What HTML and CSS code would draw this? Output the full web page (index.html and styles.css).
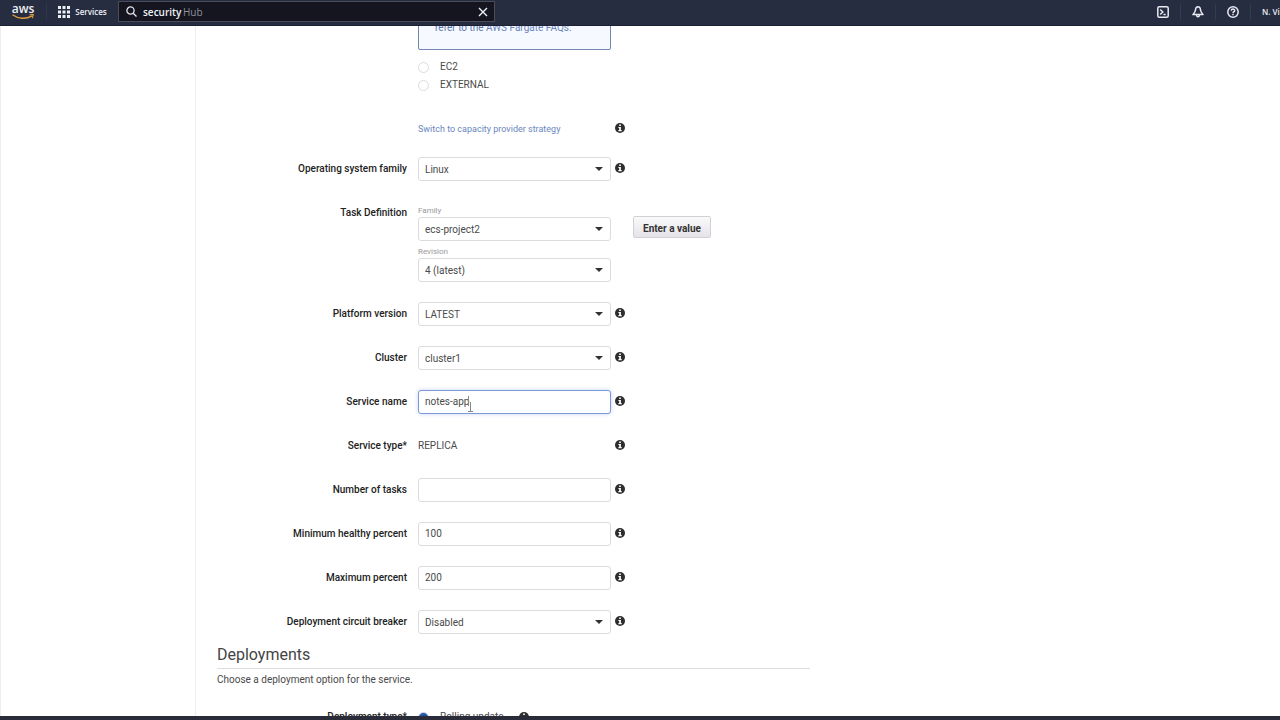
FILE: index.html
```
<!DOCTYPE html>
<html lang="en">
<head>
    <meta charset="UTF-8">
    <meta name="viewport" content="width=device-width, initial-scale=1.0">
    <title>Create Service</title>
    <link rel="stylesheet" href="styles.css">
</head>
<body>
    <svg class="defs" aria-hidden="true">
        <symbol id="info" viewBox="0 0 10 10">
            <circle cx="5" cy="5" r="5" fill="#2e2e2e"/>
            <path d="M4.2 1.5h1.7v1.5H4.2zM3.4 4h2.5v3.1h.8v1.1H3.4V7.1h.8V5h-.8z" fill="#fff"/>
        </symbol>
    </svg>

    <header class="topbar">
        <a class="logo" href="#" aria-label="AWS home">
            <span class="logo-text">aws</span>
            <svg class="logo-smile" viewBox="0 0 22 6">
                <path d="M0.5 0.8C6 5 14 5.4 20 1.8" fill="none" stroke="#e39a3b" stroke-width="1.4"/>
                <path d="M17.5 0.7L21.3 0.5L20.3 4.2" fill="none" stroke="#e39a3b" stroke-width="1.1"/>
            </svg>
        </a>
        <button class="services">
            <svg width="12" height="12" viewBox="0 0 12 12" fill="#eef0f5">
                <path d="M0 0h3v3H0zM4.5 0h3v3h-3zM9 0h3v3H9zM0 4.5h3v3H0zM4.5 4.5h3v3h-3zM9 4.5h3v3H9zM0 9h3v3H0zM4.5 9h3v3h-3zM9 9h3v3H9z"/>
            </svg>
            Services
        </button>
        <div class="search">
            <svg width="11" height="11" viewBox="0 0 11 11" fill="none" stroke="#e3e5ea" stroke-width="1.3">
                <circle cx="4.5" cy="4.5" r="3.6"/>
                <path d="M7.2 7.2L10.5 10.5"/>
            </svg>
            <input class="search-input" type="text" value="security" aria-label="Search">
            <span class="search-hint">Hub</span>
            <button class="search-clear" aria-label="Clear search">
                <svg width="10" height="10" viewBox="0 0 10 10" stroke="#eef0f5" stroke-width="1.4"><path d="M1 1l8 8M9 1L1 9"/></svg>
            </button>
        </div>
        <nav class="tools">
            <button class="tool" aria-label="CloudShell">
                <svg width="12" height="12" viewBox="0 0 12 12" fill="none" stroke="#e6e8f2" stroke-width="1.5">
                    <rect x="0.8" y="0.8" width="10.4" height="10.4" rx="1.5"/>
                    <path d="M3.2 3.5L5.8 6L3.2 8.5M6.5 8.5h2.2"/>
                </svg>
            </button>
            <button class="tool" aria-label="Notifications">
                <svg width="12" height="12" viewBox="0 0 12 12" fill="none" stroke="#e6e8f2" stroke-width="1.5">
                    <path d="M6 0.8C4.2 0.9 3.6 2.3 3.5 3.8C3.4 6 2.4 7 1 8.6H11C9.6 7 8.6 6 8.5 3.8C8.4 2.3 7.8 0.9 6 0.8Z" stroke-linejoin="round"/>
                    <path d="M4.6 8.8C4.6 11.5 7.4 11.5 7.4 8.8"/>
                </svg>
            </button>
            <button class="tool" aria-label="Help">
                <svg width="12" height="12" viewBox="0 0 12 12" fill="none" stroke="#e6e8f2" stroke-width="1.5">
                    <circle cx="6" cy="6" r="5.2"/>
                    <path d="M4.3 4.7C4.3 2.5 7.8 2.6 7.7 4.6C7.6 5.7 6 5.7 6 7.2M6 8v1.3"/>
                </svg>
            </button>
            <button class="account">N. Vi</button>
        </nav>
    </header>

    <div class="page">
        <aside class="sidebar"></aside>
        <main class="content">
            <form class="service-form">
                <div class="row launch-row">
                    <div class="field">
                        <div class="notice">refer to the <a href="#">AWS Fargate FAQs.</a></div>
                        <label class="radio"><input type="radio" name="launch" value="ec2">EC2</label>
                        <label class="radio"><input type="radio" name="launch" value="external">EXTERNAL</label>
                    </div>
                </div>

                <div class="row switch-row">
                    <div class="field"><a href="#">Switch to capacity provider strategy</a></div>
                    <svg class="info"><use href="#info"/></svg>
                </div>

                <div class="row">
                    <label for="os">Operating system family</label>
                    <div class="field select"><select id="os"><option>Linux</option></select></div>
                    <svg class="info"><use href="#info"/></svg>
                </div>

                <div class="row">
                    <span class="row-title">Task Definition</span>
                    <div class="field task">
                        <label class="sub-label" for="family">Family</label>
                        <div class="select"><select id="family"><option>ecs-project2</option></select></div>
                        <label class="sub-label revision" for="revision">Revision</label>
                        <div class="select"><select id="revision"><option>4 (latest)</option></select></div>
                    </div>
                    <button class="btn" type="button">Enter a value</button>
                </div>

                <div class="row">
                    <label for="platform">Platform version</label>
                    <div class="field select"><select id="platform"><option>LATEST</option></select></div>
                    <svg class="info"><use href="#info"/></svg>
                </div>

                <div class="row">
                    <label for="cluster">Cluster</label>
                    <div class="field select"><select id="cluster"><option>cluster1</option></select></div>
                    <svg class="info"><use href="#info"/></svg>
                </div>

                <div class="row">
                    <label for="name">Service name</label>
                    <div class="field name-field">
                        <input class="text active" id="name" type="text" value="notes-app">
                        <svg class="pointer" width="6" height="16" viewBox="0 0 6 16" fill="none">
                            <path d="M1.5 0v10" stroke="#888"/>
                            <path d="M3.5 6v9M1 15.5h5" stroke="#888"/>
                        </svg>
                    </div>
                    <svg class="info"><use href="#info"/></svg>
                </div>

                <div class="row">
                    <span class="row-title">Service type*</span>
                    <div class="field">REPLICA</div>
                    <svg class="info"><use href="#info"/></svg>
                </div>

                <div class="row">
                    <label for="tasks">Number of tasks</label>
                    <div class="field"><input class="text" id="tasks" type="text"></div>
                    <svg class="info"><use href="#info"/></svg>
                </div>

                <div class="row">
                    <label for="min">Minimum healthy percent</label>
                    <div class="field"><input class="text" id="min" type="text" value="100"></div>
                    <svg class="info"><use href="#info"/></svg>
                </div>

                <div class="row">
                    <label for="max">Maximum percent</label>
                    <div class="field"><input class="text" id="max" type="text" value="200"></div>
                    <svg class="info"><use href="#info"/></svg>
                </div>

                <div class="row">
                    <label for="breaker">Deployment circuit breaker</label>
                    <div class="field select"><select id="breaker"><option>Disabled</option></select></div>
                    <svg class="info"><use href="#info"/></svg>
                </div>

                <h2>Deployments</h2>
                <p>Choose a deployment option for the service.</p>

                <div class="row">
                    <span class="row-title">Deployment type*</span>
                    <div class="field deploy">
                        <label class="radio"><input type="radio" name="deploy" checked>Rolling update</label>
                        <svg class="info"><use href="#info"/></svg>
                    </div>
                </div>
            </form>
        </main>
    </div>
    <footer class="footer"></footer>
</body>
</html>
```

FILE: styles.css
```
* {
    box-sizing: border-box;
}
body {
    display: flex;
    flex-direction: column;
    height: 100vh;
    margin: 0;
    overflow: hidden;
    background: #fff;
    color: #4a4a4a;
    font-family: Roboto, "Liberation Sans", sans-serif;
    font-size: 10px;
}
button,
input,
select {
    font: inherit;
    color: inherit;
}
a {
    color: #6a86bd;
    text-decoration: none;
}
.defs {
    position: absolute;
    width: 0;
    height: 0;
}

/* Top bar */
.topbar {
    display: flex;
    flex: none;
    align-items: center;
    height: 26px;
    padding-bottom: 2px;
    background: #262d41;
    border-bottom: 1px solid #1b2034;
    color: #eef0f5;
    font-family: "Open Sans", "Noto Sans", sans-serif;
    font-size: 8px;
    overflow: hidden;
}
.topbar button {
    padding: 0;
    background: none;
    border: 0;
}
.logo {
    display: flex;
    flex-direction: column;
    align-items: center;
    width: 47px;
    color: #eef0f5;
    border-right: 1px solid #30374b;
}
.logo-text {
    font-size: 12px;
    font-weight: 600;
    line-height: 11px;
}
.logo-smile {
    width: 22px;
    height: 6px;
}
.services {
    display: flex;
    align-items: center;
    justify-content: center;
    gap: 5px;
    width: 71px;
    font-weight: 600;
}
.search {
    display: flex;
    align-items: center;
    width: 377px;
    height: 21px;
    padding: 0 6px 0 7px;
    background: #14151f;
    border: 1px solid #4a4d58;
    font-size: 10px;
}
.search-input {
    width: 40px;
    margin-left: 6px;
    padding: 0;
    background: none;
    border: 0;
    outline: 0;
    font-weight: 600;
}
.search-hint {
    flex: 1;
    color: #8f9198;
}
.search-clear,
.tool {
    display: flex;
    align-items: center;
    justify-content: center;
}
.tools {
    display: flex;
    align-items: center;
    margin-left: auto;
}
.tool {
    width: 35px;
    height: 16px;
}
.topbar .tool {
    border-right: 1px solid #363c50;
}
.topbar .account {
    width: 18px;
    margin-left: 11px;
    overflow: hidden;
    font-weight: 600;
    text-align: left;
    white-space: nowrap;
}

/* Page */
.page {
    display: flex;
    flex: 1;
    min-height: 0;
    overflow: hidden;
}
.sidebar {
    flex: none;
    width: 196px;
    border-left: 1px solid #eee;
    border-right: 1px solid #eee;
}
.content {
    flex: 1;
    padding: 0 21px;
}
.service-form {
    max-width: 593px;
}
.footer {
    flex: none;
    height: 4px;
    background: #2b2c39;
}

/* Form rows */
.row {
    display: grid;
    grid-template-columns: 190px 193px auto;
    justify-content: start;
    column-gap: 11px;
    margin-bottom: 20px;
    line-height: 24px;
}
.row > label,
.row-title {
    color: #222;
    font-weight: 500;
    text-align: right;
}
.row > .field {
    grid-column: 2;
}
.row > .info {
    margin: 6px 0 0 -7px;
}
.info {
    width: 10px;
    height: 10px;
}
.launch-row {
    margin-bottom: 23px;
}
.switch-row {
    margin-bottom: 16px;
}
.switch-row a {
    font-size: 9px;
}
.notice {
    margin: -18px 0 8px;
    padding: 12px 16px 14px;
    background: #f6f9ff;
    border: 1px solid #7186b3;
    border-radius: 2px;
    color: #5c78ae;
    line-height: 14px;
}
.radio {
    display: flex;
    align-items: center;
    gap: 11px;
    line-height: 18px;
}
.radio input {
    appearance: none;
    width: 11px;
    height: 11px;
    margin: 0;
    border: 1px solid #dcdce0;
    border-radius: 50%;
}
.radio input:checked {
    background: #2456a8;
    border: 1px solid #d3def2;
}
.select {
    position: relative;
}
.select::after {
    content: "";
    position: absolute;
    top: 10px;
    right: 8px;
    border: 4px solid transparent;
    border-top-color: #333;
    border-bottom: 0;
    pointer-events: none;
}
.select select,
.text {
    display: block;
    appearance: none;
    width: 100%;
    height: 24px;
    padding: 0 6px;
    background: #fff;
    border: 1px solid #dcdce0;
    border-radius: 3px;
    outline: 0;
}
.text.active {
    border-color: #7d99d6;
    box-shadow: 0 0 4px #c5d3f2;
}
.name-field {
    position: relative;
}
.pointer {
    position: absolute;
    top: 6px;
    left: 49px;
}
.task {
    padding-top: 4px;
}
.sub-label {
    display: block;
    color: #999;
    font-size: 8px;
    line-height: 12px;
}
.revision {
    margin-top: 5px;
}
.btn {
    align-self: start;
    height: 22px;
    margin: 15px 0 0 11px;
    padding: 0 9px 1px;
    background: linear-gradient(#fafafa, #e6e2e8);
    border: 1px solid #d2d0d4;
    border-radius: 2px;
    color: #333;
    font-weight: 700;
}
h2 {
    margin: -12px 0 4px;
    border-bottom: 1px solid #ddd;
    color: #444;
    font-size: 16px;
    font-weight: 400;
    line-height: 26px;
}
p {
    margin: 0 0 18px;
    line-height: 14px;
}
.deploy {
    display: flex;
    align-items: center;
    gap: 15px;
}
```
